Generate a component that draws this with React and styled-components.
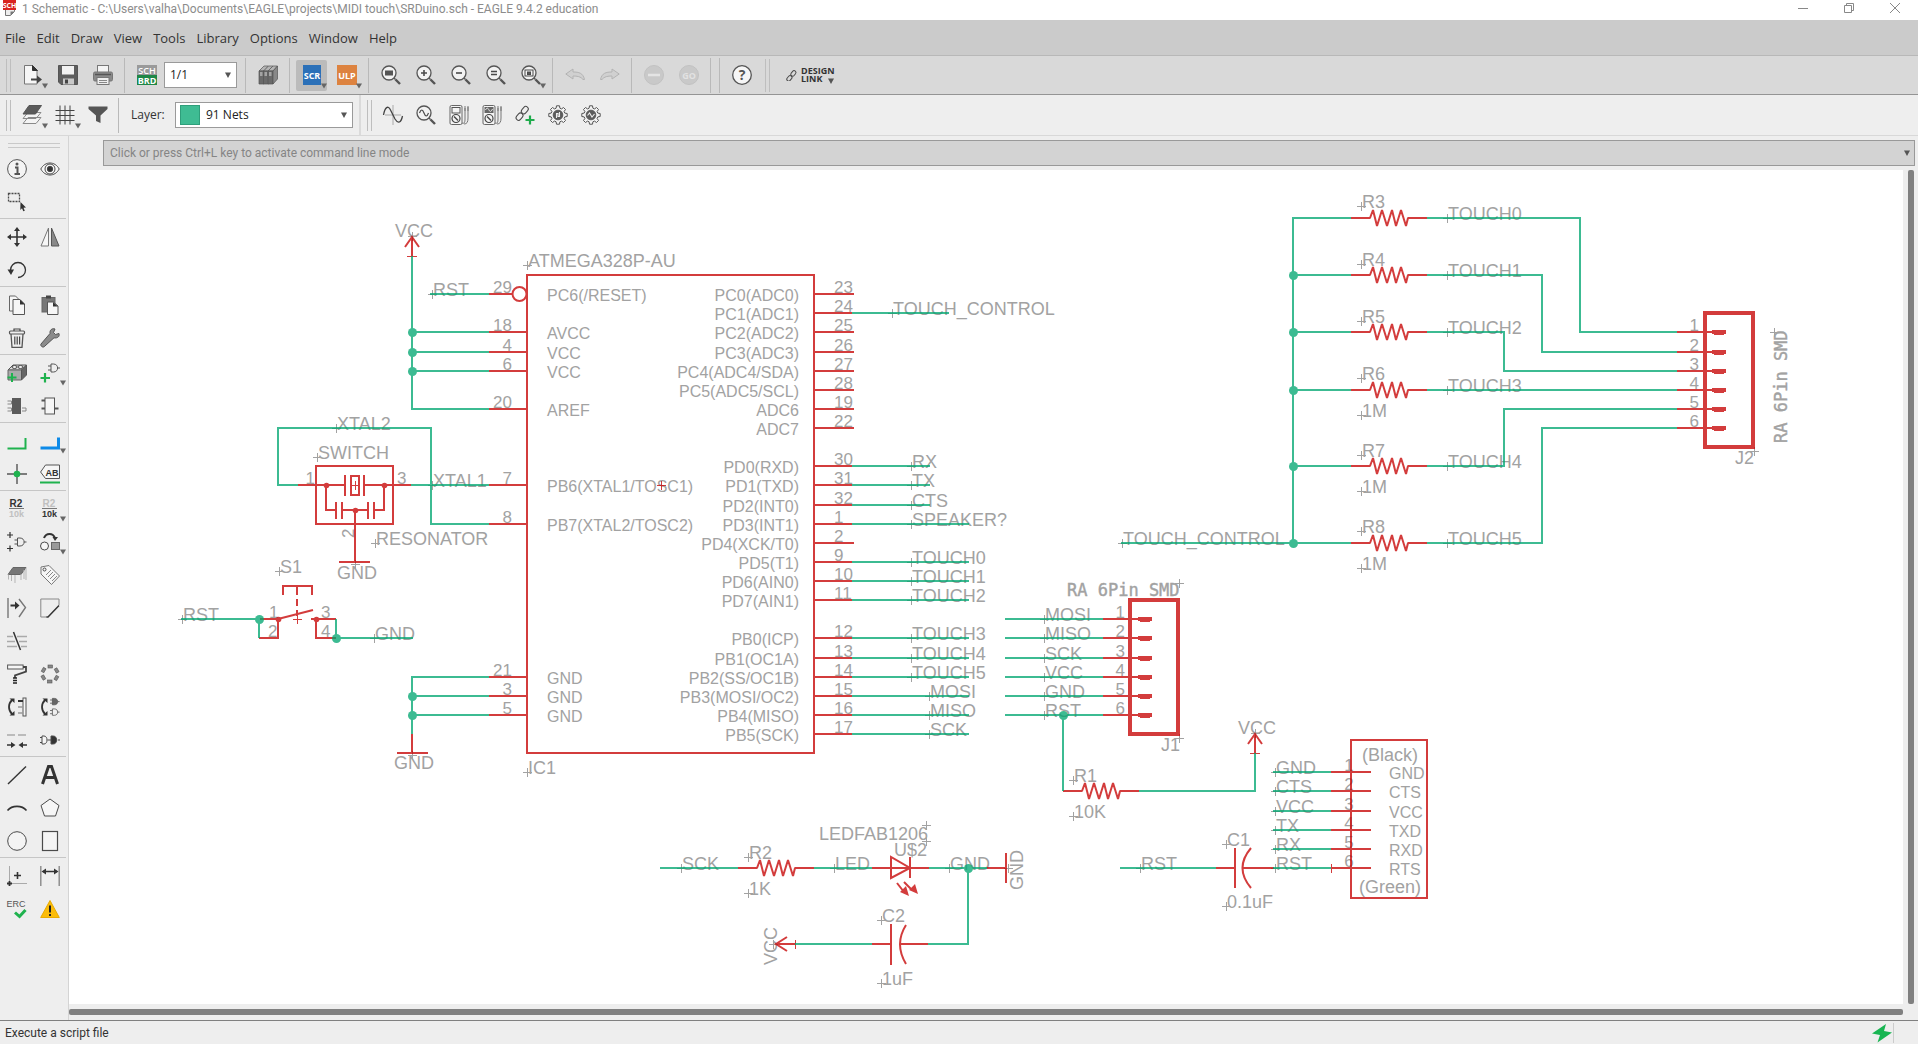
import React from "react";
import styled, { createGlobalStyle } from "styled-components";

const GlobalStyle = createGlobalStyle`
  * { box-sizing: border-box; }
  html, body, #root { height: 100%; margin: 0; }
  body {
    font-family: "Open Sans", "Noto Sans", sans-serif;
    font-size: 13px;
    line-height: 18px;
    color: #333;
    background: #eee;
    overflow: hidden;
  }
  button, select, input { font: inherit; color: inherit; }
`;

const SMALL_FONT = 'Roboto, "Open Sans", sans-serif';

/* ---------- window chrome ---------- */

const Window = styled.div`
  display: flex;
  flex-direction: column;
  height: 100vh;
`;

const TitleBar = styled.header`
  display: flex;
  align-items: flex-start;
  height: 20px;
  padding-left: 3px;
  background: #fff;
  color: #8c8c8c;
`;

const Title = styled.h1`
  flex: 1;
  margin: 0 0 0 6px;
  font-family: ${SMALL_FONT};
  font-size: 12px;
  line-height: 18px;
  font-weight: 400;
  white-space: nowrap;
`;

const WindowButton = styled.button`
  width: 46px;
  height: 16px;
  padding: 0;
  border: 0;
  background: none;
  display: grid;
  place-items: center;
`;

const MenuBar = styled.nav`
  display: flex;
  align-items: center;
  gap: 11px;
  height: 36px;
  padding: 0 5px;
  background: #cbcbcb;
  border-bottom: 1px solid #b8b8b8;
`;

const MenuItem = styled.button`
  padding: 0;
  border: 0;
  background: none;
  font-size: 13px;
  line-height: 18px;
`;

const Toolbar = styled.div`
  display: flex;
  align-items: center;
  height: ${(p) => (p.$main ? 39 : 41)}px;
  background: ${(p) => (p.$main ? "#d9d9d9" : "#eee")};
  border-bottom: 1px solid ${(p) => (p.$main ? "#949494" : "#d8d8d8")};
`;

const Handle = styled.div`
  flex: none;
  width: 5px;
  height: ${(p) => p.$h || 33}px;
  margin: 0 4px 0 6px;
  border: solid #bebebe;
  border-width: 0 1px;
`;

const Divider = styled.div`
  flex: none;
  width: 1px;
  height: 35px;
  margin: 0 4px;
  background: #b9b9b9;
`;

const BarEdge = styled.div`
  flex: none;
  width: 2px;
  height: 40px;
  margin-left: 2px;
  background: #dadada;
`;

const ToolButton = styled.button`
  position: relative;
  flex: none;
  width: ${(p) => p.$w || 35}px;
  height: 33px;
  padding: 0;
  border: 0;
  border-radius: 2px;
  display: grid;
  place-items: center;
  background: none;
  & > svg { display: block; overflow: visible; }
`;

const Pressed = styled.span`
  display: grid;
  place-items: center;
  width: 31px;
  height: 31px;
  border-radius: 2px;
  background: #bbb;
`;

const DropMark = styled.svg`
  position: absolute;
  right: ${(p) => (p.$tight ? 0 : 2)}px;
  bottom: 3px;
`;

const SelectBox = styled.div`
  position: relative;
  flex: none;
  width: ${(p) => p.$w}px;
  margin-right: 4px;
  & > svg { position: absolute; right: 6px; top: 10px; pointer-events: none; }
`;

const Select = styled.select`
  appearance: none;
  display: block;
  width: 100%;
  height: 26px;
  padding: 0 20px 0 ${(p) => p.$pad || 5}px;
  border: 1px solid #9a9a9a;
  border-radius: 0;
  background: #fff;
  color: #222;
  font-size: 12px;
`;

const Swatch = styled.span`
  position: absolute;
  left: 5px;
  top: 3px;
  width: 20px;
  height: 20px;
  border: 1px solid #2f9f7b;
  background: #3fbc93;
`;

const LayerLabel = styled.label`
  width: 44px;
  margin-left: 8px;
  font-size: 12px;
`;

const DesignLink = styled.button`
  display: flex;
  align-items: center;
  gap: 3px;
  margin-left: 12px;
  padding: 0;
  border: 0;
  background: none;
  position: relative;
  font-size: 9px;
  line-height: 8px;
  font-weight: 700;
  text-align: left;
  & > svg:last-child { position: absolute; right: 0; bottom: -1px; }
`;

/* ---------- body ---------- */

const Body = styled.div`
  flex: 1;
  min-height: 0;
  display: flex;
`;

const Palette = styled.aside`
  flex: none;
  width: 69px;
  padding-right: 2px;
  border-right: 1px solid #d4d4d4;
`;

const PaletteHandle = styled.div`
  height: 5px;
  margin: 7px 6px 4px 8px;
  border: solid #c9c9c9;
  border-width: 1px 0;
`;

const PaletteGroup = styled.div`
  display: grid;
  grid-template-columns: 33px 33px;
  & + & { border-top: 1px solid #c6c6c6; padding-top: 1px; }
`;

const Workspace = styled.main`
  flex: 1;
  min-width: 0;
  display: grid;
  grid-template-columns: 1fr 15px;
  grid-template-rows: 34px 1fr 16px;
`;

const CommandRow = styled.div`
  grid-column: 1 / 3;
  padding: 4px 3px 4px 34px;
`;

const CommandBox = styled.div`
  position: relative;
  & > svg { position: absolute; right: 5px; top: 10px; }
`;

const CommandInput = styled.input`
  display: block;
  width: 100%;
  height: 26px;
  padding: 0 6px;
  border: 1px solid #999;
  background: #d3d3d3;
  font-family: ${SMALL_FONT};
  font-size: 12px;
  &::placeholder { color: #858585; opacity: 1; }
`;

const Sheet = styled.div`
  background: #fff;
  overflow: hidden;
  & > svg { display: block; width: 100%; height: 100%; }
`;

const ScrollY = styled.div`
  padding-left: 5px;
  &::before { content: ""; display: block; width: 6px; height: 100%; border-radius: 2px; background: #808080; }
`;

const ScrollX = styled.div`
  padding-top: 5px;
  &::before { content: ""; display: block; height: 6px; border-radius: 2px; background: #808080; }
`;

const StatusBar = styled.footer`
  display: flex;
  align-items: center;
  height: 24px;
  padding: 0 24px 0 5px;
  border-top: 1px solid #808080;
  font-family: ${SMALL_FONT};
  font-size: 12px;
`;

const StatusText = styled.span`
  flex: 1;
`;

const StatusLamp = styled.span`
  padding-right: 1px;
  border-right: 1px solid #ccc;
  & > svg { display: block; }
`;

/* ---------- icons ---------- */

const K = "#4a4a4a";

const Ic = ({ children, s = 20, ...rest }) => (
  <svg width={s} height={s} viewBox="0 0 20 20" fill="none" stroke={K} strokeWidth="1" aria-hidden="true" {...rest}>
    {children}
  </svg>
);

const Tri = () => (
  <svg width="6" height="6" viewBox="0 0 6 6" aria-hidden="true"><path d="M0 0.5h6L3 6z" fill="#555" /></svg>
);

const MarkTri = ({ tight }) => (
  <DropMark $tight={tight} width="6" height="6" viewBox="0 0 6 6" aria-hidden="true"><path d="M0 0.5h6L3 5.5z" fill="#666" /></DropMark>
);

const IconText = ({ x, y, size = 8, fill = "#fff", children, anchor = "middle", weight = 700, family = "'Open Sans', 'Noto Sans', sans-serif" }) => (
  <text x={x} y={y} fontSize={size} fontWeight={weight} fill={fill} stroke="none" textAnchor={anchor} fontFamily={family}>
    {children}
  </text>
);

const BOLD_SANS = "'Liberation Sans', Arial, sans-serif";

const Lens = ({ children }) => (
  <Ic>
    <circle cx="8" cy="8" r="7" fill="#f2f2f2" stroke="#555" strokeWidth="1.3" />
    <path d="M13 13l1.5 1.5" stroke="#555" strokeWidth="1.4" />
    <path d="M14.5 14.5l4.5 4.5" stroke="#555" strokeWidth="2.4" />
    {children}
  </Ic>
);

const Cog = () => (
  <>
    <path
      d="M8.5 .8h3l.4 2.4 1.6.7 2-1.4 2 2-1.4 2 .7 1.6 2.4.4v3l-2.4.4-.7 1.6 1.4 2-2 2-2-1.4-1.6.7-.4 2.4h-3l-.4-2.4-1.6-.7-2 1.4-2-2 1.4-2-.7-1.6L.8 11.500v-3l2.400-.4.7-1.600-1.400-2 2-2 2 1.400 1.600-.7z"
      fill="#f2f2f2" stroke="#555"
    />
    <circle cx="10" cy="10" r="4.800" fill="#5c5c5c" stroke="#5c5c5c" />
  </>
);

const Chain = () => (
  <>
    <rect x="-5.500" y="-2.500" width="8" height="5" rx="2.500" transform="translate(5.500 10.500) rotate(-50)" />
    <rect x="-3.500" y="-2.500" width="8" height="5" rx="2.500" transform="translate(9.500 5.500) rotate(-50)" />
  </>
);

const Meter = ({ wave }) => (
  <Ic>
    <rect x="1" y=".5" width="12" height="19" rx="1.500" fill="#f4f4f4" stroke="#666" />
    {wave ? (
      <>
        <rect x="2.500" y="2" width="9" height="6" fill="#666" stroke="none" />
        <path d="M3.500 5c1.500-3 2.500-2 3.500 0s2 2 3.500-1" stroke="#eee" />
      </>
    ) : (
      <rect x="3" y="2.500" width="8" height="5.500" stroke="#555" />
    )}
    <circle cx="7" cy="13.500" r="4" stroke="#444" strokeWidth="1.200" />
    <path d="M5 11.500l4 4" stroke="#444" strokeWidth="1.400" />
    <path d="M13 18c2.500 1 3-1 3-4V3M19 2v11c0 4-1 6-4 6M16 1v5M19 1v5" stroke="#777" />
  </Ic>
);

const Gate = ({ x = 0, y = 0, fill = "none" }) => (
  <g transform={`translate(${x} ${y})`} stroke="#555">
    <path d="M3 .5h2.500c5.500 0 5.500 8 0 8H3z" fill={fill} />
    <path d="M0 2.500h3M0 6.500h3M9.500 4.500H12" />
  </g>
);

const Plus = ({ x, y, r = 3, w = 1.2, c = "#333" }) => (
  <path d={`M${x - r} ${y}h${2 * r}M${x} ${y - r}v${2 * r}`} stroke={c} strokeWidth={w} />
);

const Icons = {
  app: (
    <svg width="13" height="16" viewBox="0 0 13 16" aria-hidden="true">
      <path d="M2.500 4.500h9v7l-4 4h-5z" fill="#eee" stroke="#777" />
      <path d="M7.500 15.500v-4h4z" fill="#777" />
      <rect width="13" height="10" y="0" fill="#d8241f" />
      <IconText x="6.500" y="8" size="7">SCH</IconText>
    </svg>
  ),
  newDoc: (
    <Ic>
      <path d="M1.500.5h8l4.500 4.500v14h-12.500z" fill="#f6f6f6" stroke="#777" />
      <path d="M9.500.5v5h5z" fill="#333" stroke="#333" />
      <path d="M8 14.500h7" stroke="#444" strokeWidth="2" />
      <path d="M14 10.500l5 4-5 4z" fill="#444" stroke="none" />
    </Ic>
  ),
  save: (
    <Ic>
      <path d="M.5.500h19v19H3l-2.500-2.500z" fill="#5e5e5e" stroke="#555" />
      <rect x="4" y="1" width="12" height="8.500" fill="#f2f2f2" stroke="none" />
      <rect x="5" y="13.500" width="11" height="6" fill="#c9c9c9" stroke="none" />
      <rect x="7" y="14.500" width="3" height="4" fill="#444" stroke="none" />
    </Ic>
  ),
  print: (
    <Ic>
      <rect x="4.500" y=".5" width="11" height="7" fill="#f4f4f4" stroke="#777" />
      <rect x=".5" y="7" width="19" height="9" rx="1.500" fill="#8a8a8a" stroke="#777" />
      <path d="M2 9.500h16" stroke="#555" strokeWidth="1.500" />
      <rect x="4" y="12.500" width="12" height="7" fill="#eee" stroke="#777" />
      <path d="M6 15.500h8M6 17.500h8" stroke="#888" />
    </Ic>
  ),
  schBrd: (
    <Ic>
      <rect width="20" height="10" fill="#9a9a9a" stroke="none" />
      <rect y="10" width="20" height="10" fill="#1f8746" stroke="none" />
      <IconText x="10" y="8.500" size="9" weight={600}>SCH</IconText>
      <IconText x="10" y="18.500" size="9">BRD</IconText>
    </Ic>
  ),
  books: (
    <Ic>
      {[0, 4.5, 9].map((x) => (
        <g key={x} transform={`translate(${x} 0)`}>
          <path d="M1 6l5-5h4.500l-4.500 5z" fill="#b5b5b5" stroke="#555" strokeWidth=".7" />
          <path d="M1 6h5v13H1z" fill="#6a6a6a" stroke="#555" strokeWidth=".7" />
          <path d="M2 8h2.500M2 10h2.500" stroke="#ddd" />
        </g>
      ))}
      <path d="M15 6l4.500-5v13l-4.500 5z" fill="#888" stroke="#555" strokeWidth=".7" />
    </Ic>
  ),
  scr: (
    <Ic>
      <rect x="1" width="18" height="20" fill="#2b70b8" stroke="none" />
      <IconText x="10" y="13.500" size="9">SCR</IconText>
    </Ic>
  ),
  ulp: (
    <Ic>
      <rect width="20" height="20" fill="#dd8340" stroke="none" />
      <IconText x="10" y="13.500" size="9">ULP</IconText>
    </Ic>
  ),
  zoomFit: <Lens><rect x="4" y="5.500" width="8" height="5" fill="#555" stroke="none" /></Lens>,
  zoomIn: <Lens><path d="M5 8h6M8 5v6" strokeWidth="1.600" /></Lens>,
  zoomOut: <Lens><path d="M5 8h6" strokeWidth="1.600" /></Lens>,
  zoomRedraw: <Lens><path d="M5 6.500h6M5 9.500h6" strokeWidth="1.500" /></Lens>,
  zoomSel: <Lens><rect x="4" y="5" width="8" height="6" /><rect x="6.500" y="7" width="3" height="2.500" fill="#555" /></Lens>,
  undo: <Ic stroke="#b3b3b3"><path d="M.8 9L8 4v3c6 0 10 1 11.500 7.500h-1.500C16 11.500 12 11 8 11v3z" fill="#d0d0d0" /></Ic>,
  redo: <Ic stroke="#b3b3b3"><path d="M19.200 9L12 4v3C6 7 2 8 .5 14.500H2C4 11.500 8 11 12 11v3z" fill="#d0d0d0" /></Ic>,
  stop: <Ic><circle cx="10" cy="10" r="9.500" fill="#c9c9c9" stroke="#c2c2c2" /><path d="M4 10h12" stroke="#e4e4e4" strokeWidth="2.500" /></Ic>,
  go: <Ic><circle cx="10" cy="10" r="9.500" fill="#c9c9c9" stroke="#c2c2c2" /><IconText x="10" y="13.500" size="9" fill="#e2e2e2">GO</IconText></Ic>,
  help: <Ic><circle cx="10" cy="10" r="9.300" fill="#f6f6f6" stroke="#555" strokeWidth="1.300" /><IconText x="10" y="15" size="14" fill="#555">?</IconText></Ic>,
  link: <Ic s={12} strokeWidth="1.300"><g transform="translate(0 1) scale(1.250)"><Chain /></g></Ic>,
  layers: (
    <Ic>
      <path d="M1 18.500l5-6h13l-5 6zM1 13.500l5-6h13l-5 6z" fill="#f4f4f4" stroke="#8a8a8a" />
      <path d="M1 9l6-8.500h12.500L13.500 9z" fill="#5b5b5b" stroke="#555" />
    </Ic>
  ),
  grid: <Ic><path d="M5 .5v19M10 .5v19M15 .5v19M.5 5.500h19M.5 10.500h19M.5 15.500h19" stroke="#444" /></Ic>,
  filter: <Ic><path d="M.5 1.500h19v2.500l-7 6.500v7.500l-4.500-2V10.500L.5 4z" fill="#555" stroke="none" /></Ic>,
  sine: <Ic><path d="M10 0v20M2 10h16" stroke="#aaa" /><path d="M.5 10C2 2 5 0 7.500 5l4.500 9c3 5 6 4 7.500-3" stroke="#444" strokeWidth="1.300" /></Ic>,
  probe: <Lens><path d="M3.500 8c1.500-4 3-4 4.500 0s3 4 4.500 0" strokeWidth="1.200" /></Lens>,
  meter: <Meter />,
  meterWave: <Meter wave />,
  linkAdd: <Ic><Chain /><path d="M15 10.500v9M10.500 15h9" stroke="#1fab4c" strokeWidth="2.200" /></Ic>,
  cogDoc: <Ic><Cog /><path d="M8.500 13V8.500h1.500v3h1.500V7" stroke="#eee" strokeWidth="1.100" /></Ic>,
  cogWave: <Ic><Cog /><path d="M6.500 10.500l2-2.500 2.500 4 2.500-3" stroke="#eee" strokeWidth="1.100" /></Ic>,
  info: <Ic><circle cx="10" cy="10" r="9.400" fill="#f4f4f4" stroke="#555" /><path d="M8 8.500h2.500v6M7.500 15h5.500" stroke="#555" strokeWidth="2" /><circle cx="10" cy="5" r="1.500" fill="#555" stroke="none" /></Ic>,
  eye: <Ic><path d="M.8 10C5 2 15 2 19.200 10 15 18 5 18 .8 10z" fill="#f6f6f6" /><circle cx="10" cy="10" r="5" /><circle cx="10" cy="10" r="2.700" fill="#333" /></Ic>,
  group: <Ic><rect x="1.500" y="1.500" width="11" height="8" strokeDasharray="2 1" strokeWidth="1.300" /><path d="M13.500 10l5.500 5.500-2.500.2 1.300 3-1.500.600-1.300-3-1.700 1.700z" fill="#333" stroke="none" /></Ic>,
  move: <Ic><path d="M10 3v14M3 10h14" stroke="#333" strokeWidth="1.600" /><path d="M10 0l3 4H7zM10 20l-3-4h6zM0 10l4-3v6zM20 10l-4 3V7z" fill="#333" stroke="none" /></Ic>,
  mirror: <Ic><path d="M8.500 1v18H1z" fill="#f6f6f6" stroke="#777" /><path d="M11.500 1v18H19z" fill="#888" stroke="#555" /></Ic>,
  rotate: <Ic><path d="M3.500 10a7.500 7.500 0 1 1 7.500 7.500" stroke="#333" strokeWidth="1.300" /><path d="M.5 9.500h6.500L4 15z" fill="#333" stroke="none" /></Ic>,
  copy: <Ic><path d="M2.500 1h6l3 3v12h-9z" fill="#f6f6f6" stroke="#666" /><path d="M6 4.500h7l4.500 4.500v10.500H6z" fill="#f6f6f6" stroke="#555" /><path d="M13 4.500v5h5z" fill="#333" stroke="none" /></Ic>,
  paste: <Ic><rect x="2" y="2.500" width="13" height="14.500" fill="#777" stroke="#666" /><rect x="6" y=".5" width="5" height="3" fill="#444" stroke="none" /><path d="M7.500 7h6l4.500 4v8.500H7.500z" fill="#f6f6f6" stroke="#555" /><path d="M13 7v4.500h5z" fill="#333" stroke="none" /></Ic>,
  trash: <Ic><path d="M4 6l1 13.300h10L16 6" stroke="#555" strokeWidth="1.300" /><rect x="2.500" y="3" width="15" height="3" rx="1" stroke="#555" strokeWidth="1.200" /><path d="M7 3V1h6v2M7.800 8.500v8M10.200 8.500v8M12.600 8.500v8" stroke="#444" strokeWidth="1.200" /></Ic>,
  wrench: <Ic><path d="M19 5.500l-3.500 1-2-2L15 1C12 0 9.500 2 10 5.500L1 16c-1 1.500 1.500 4 3.200 2.700L14 9.800C17.500 10.500 20 8.500 19 5.500z" fill="#8b8b8b" stroke="#555" /></Ic>,
  addPart: (
    <Ic>
      <path d="M1 7l5-5h13.500l-5 5z" fill="#ddd" stroke="#555" />
      <path d="M1 7h13.500v10H1z" fill="#aaa" stroke="#666" />
      <path d="M14.500 7l5-5v10l-5 5z" fill="#666" stroke="#555" />
      <ellipse cx="7.500" cy="4" rx="2.500" ry="1.500" fill="#eee" /><ellipse cx="13.500" cy="4" rx="2.500" ry="1.500" fill="#eee" />
      <path d="M5 10v9M.5 14.500h9" stroke="#1fb24e" strokeWidth="2" />
    </Ic>
  ),
  addGate: <Ic><Gate x={8} y={0.5} /><path d="M5 10v9.500M.5 15h9.500" stroke="#1fb24e" strokeWidth="2.200" /></Ic>,
  replace: <Ic><path d="M.5 5h4v3h-4M.5 12h4v3h-4M15 12h4v3h-4" stroke="#888" /><rect x="5" y="2" width="9" height="16" fill="#5b5b5b" stroke="none" /></Ic>,
  invoke: <Ic><path d="M1.500 4.500h4M1.500 12.500h4M14.500 12.500h4" stroke="#555" strokeWidth="2" /><rect x="5" y="2" width="9.500" height="16" fill="#f6f6f6" stroke="#555" /></Ic>,
  net: <Ic><path d="M.5 17.500h18V7" stroke="#1fb24e" strokeWidth="2" /></Ic>,
  bus: <Ic><path d="M.5 17h18V6.500" stroke="#0d8ae8" strokeWidth="3" /></Ic>,
  junction: <Ic><path d="M10 0v20M0 10h20" stroke="#555" strokeWidth="1.400" /><circle cx="10" cy="10" r="3.300" fill="#1fb24e" stroke="none" /></Ic>,
  label: <Ic><path d="M5.500 1h14v13.500h-14L.6 8z" fill="#f6f6f6" stroke="#555" /><IconText x="12" y="11.500" size="9" fill="#333" family={BOLD_SANS}>AB</IconText><path d="M0 18.500h20" stroke="#1fb24e" strokeWidth="2" /></Ic>,
  name: <Ic><IconText x="9" y="8" size="10" fill="#333" family={BOLD_SANS}>R2</IconText><path d="M2 9.500h15" stroke="#777" /><IconText x="9.500" y="18" size="9" fill="#c0c0c0" family={BOLD_SANS}>10k</IconText></Ic>,
  value: <Ic><IconText x="9" y="8" size="10" fill="#c0c0c0" family={BOLD_SANS}>R2</IconText><path d="M2 9.500h15" stroke="#777" /><IconText x="9.500" y="18" size="9" fill="#333" family={BOLD_SANS}>10k</IconText></Ic>,
  gateAdd: <Ic><Gate x={7.5} y={5.5} /><Plus x={3} y={3} /><Plus x={3} y={16.5} /></Ic>,
  swap: <Ic><path d="M4 6c2-5.500 9-5.500 11 0" stroke="#333" strokeWidth="2" /><path d="M12.500 5h5.500l-3 4z" fill="#333" stroke="none" /><circle cx="4.500" cy="14" r="4" fill="#f6f6f6" /><rect x="11.500" y="10.500" width="8" height="7" fill="#999" stroke="#666" /></Ic>,
  smash: <Ic><path d="M6 2.500h13l-5 7H1z" fill="#777" stroke="#666" /><path d="M1.500 9.500v5M4.500 10v6M8 10v8M14 9v6M17 5v9M19 3v12" stroke="#b5b5b5" /></Ic>,
  tag: <Ic><path d="M1 2l8-1.500 10.500 10.500-8 8.500L1 9z" fill="#f6f6f6" stroke="#777" /><circle cx="4.500" cy="4.500" r="1.500" /><path d="M6 10l5-5M8 12l5-5M10 14l5-5M12 16l5-5" stroke="#888" /></Ic>,
  split: <Ic><path d="M1 0v20M12 1l6.500 8.500L12 19" stroke="#777" strokeWidth="1.400" /><path d="M3.500 7.500h6" stroke="#333" strokeWidth="2" /><path d="M8 3.500l4.500 4L8 11.500z" fill="#333" stroke="none" /></Ic>,
  miter: <Ic><path d="M7 19H.8V1H19v6" stroke="#888" /><path d="M6.500 19h1.500L19 7.500" stroke="#333" strokeWidth="1.500" /></Ic>,
  slice: <Ic><path d="M0 5.500h6M10 5.500h10M0 10.500h8M12 10.500h8M0 15.500h10M14 15.500h6" stroke="#aaa" strokeWidth="1.300" /><path d="M6.500 1l7 18" stroke="#333" strokeWidth="1.500" /></Ic>,
  paint: <Ic><rect x=".6" y="1" width="15.500" height="4" fill="#f6f6f6" stroke="#555" /><path d="M16 3h3v4.500L8 11.500V14" stroke="#444" strokeWidth="1.800" /><path d="M6 14h4M6 16.500h4M6 19h4" stroke="#222" strokeWidth="1.500" /></Ic>,
  optimize: (
    <Ic>
      {[0, 60, 120, 180, 240, 300].map((a) => (
        <rect key={a} x="8" y="1" width="4.500" height="3" fill="#888" stroke="#555" strokeWidth=".6" transform={`rotate(${a} 10 10)`} />
      ))}
    </Ic>
  ),
  pinSwap: <Ic><path d="M5 3C1 7 1 13 5 17" stroke="#333" strokeWidth="1.800" /><path d="M2.500 1.500h5v4.500zM2.500 18.500h5v-4.500z" fill="#333" stroke="none" /><rect x="16" y="1" width="3" height="18" fill="#f6f6f6" stroke="#555" /><path d="M11 4h5" stroke="#333" strokeWidth="2" /><path d="M11 10h5M11 16h5" stroke="#999" strokeWidth="1.400" /></Ic>,
  gateSwap: <Ic><path d="M5 3C1 7 1 13 5 17" stroke="#333" strokeWidth="1.800" /><path d="M2.500 1.500h5v4.500zM2.500 18.500h5v-4.500z" fill="#333" stroke="none" /><g transform="translate(10 1) scale(.8)"><Gate fill="#666" /></g><g transform="translate(10 11.500) scale(.8)"><Gate /></g></Ic>,
  shorten: <Ic><path d="M0 5h8M11 5h8" stroke="#aaa" strokeWidth="1.500" /><path d="M0 15h5M15 15h5" stroke="#333" strokeWidth="1.500" /><path d="M4 12l4.500 3L4 18zM16 12l-4.500 3 4.500 3z" fill="#333" stroke="none" /></Ic>,
  gates: <Ic><path d="M0 7.500h2M0 12.500h2M20 10h-2" /><path d="M2 6h2c4 0 4 8 0 8H2z" fill="#f6f6f6" /><path d="M7.500 10H11M11 6h2c5 0 5 8 0 8h-2z" fill="#333" /></Ic>,
  line: <Ic><path d="M1 19L19 1.500" stroke="#333" strokeWidth="1.400" /></Ic>,
  text: <Ic><path d="M2.500 19L8.500 1.500h3l6 17.500M5 12.500h10" stroke="#333" strokeWidth="3" /></Ic>,
  arc: <Ic><path d="M.5 12.500C5 7 15 7 19.500 12.500" stroke="#333" strokeWidth="1.600" /></Ic>,
  polygon: <Ic><path d="M10 1l9 6.500L15.500 18h-11L1 7.500z" fill="#f6f6f6" /></Ic>,
  circle: <Ic><circle cx="10" cy="10" r="9.300" fill="#f4f4f4" /></Ic>,
  rect: <Ic><rect x="2.500" y=".5" width="15" height="19" fill="#f4f4f4" strokeWidth="1.200" /></Ic>,
  addPoint: <Ic><path d="M2.500 0v18M2 17.500h18" stroke="#aaa" /><Plus x={10.500} y={9.500} r={3.500} w={1.600} /><Plus x={2.500} y={17.500} r={2.500} w={1.800} /></Ic>,
  dimension: <Ic><path d="M.8 0v20M19.200 0v20" stroke="#888" strokeWidth="1.400" /><path d="M3 5.500h14" stroke="#333" strokeWidth="1.500" /><path d="M1.500 5.500L6 2.500v6zM18.500 5.500L14 2.500v6z" fill="#333" stroke="none" /></Ic>,
  erc: <Ic><IconText x="9" y="8" size="9" weight={400} fill="#555" family={BOLD_SANS}>ERC</IconText><path d="M8 13.500l4.500 4L18.500 11" stroke="#1fb24e" strokeWidth="3" /></Ic>,
  warn: <Ic><path d="M10 1.500L19.300 18.500H.7z" fill="#fbbc09" stroke="#e8aa00" /><path d="M10 6.500v7M10 15v2" stroke="#222" strokeWidth="2" /></Ic>,
};

/* ---------- schematic ---------- */

const NET = "#00a670";
const SYM = "#c60000";
const INK = "#a2a2a2";

const TextInk = styled.g`
  fill: ${INK};
  font-family: "Liberation Sans", Arial, sans-serif;
  font-size: 18px;
`;
const Wires = styled.g`
  fill: none;
  stroke: ${(p) => p.$c};
  stroke-width: 2;
  opacity: 0.76;
  shape-rendering: crispEdges;
`;
const PinName = styled.text`
  font-size: 16px;
  text-anchor: ${(p) => (p.$end ? "end" : "start")};
`;
const PinNo = styled.text`
  font-size: 17px;
  text-anchor: ${(p) => p.$a || "start"};
`;
const Part = styled.text`
  text-anchor: ${(p) => p.$a || "start"};
`;
const MonoPart = styled.text`
  font-family: "DejaVu Sans Mono", monospace;
  font-size: 17px;
`;

const LEFT_PINS = [
  ["29", "PC6(/RESET)", 294], ["18", "AVCC", 332], ["4", "VCC", 352], ["6", "VCC", 371],
  ["20", "AREF", 409], ["7", "PB6(XTAL1/TOSC1)", 485], ["8", "PB7(XTAL2/TOSC2)", 524],
  ["21", "GND", 677], ["3", "GND", 696], ["5", "GND", 715],
];

// number, name, y, net, label x, wire end
const RIGHT_PINS = [
  ["23", "PC0(ADC0)", 294], ["24", "PC1(ADC1)", 313, "TOUCH_CONTROL", 892, 949],
  ["25", "PC2(ADC2)", 332], ["26", "PC3(ADC3)", 352], ["27", "PC4(ADC4/SDA)", 371],
  ["28", "PC5(ADC5/SCL)", 390], ["19", "ADC6", 409], ["22", "ADC7", 428],
  ["30", "PD0(RXD)", 466, "RX", 911, 930], ["31", "PD1(TXD)", 485, "TX", 911, 930],
  ["32", "PD2(INT0)", 505, "CTS", 911, 930], ["1", "PD3(INT1)", 524, "SPEAKER?", 911, 969],
  ["2", "PD4(XCK/T0)", 543], ["9", "PD5(T1)", 562, "TOUCH0", 911, 969],
  ["10", "PD6(AIN0)", 581, "TOUCH1", 911, 969], ["11", "PD7(AIN1)", 600, "TOUCH2", 911, 969],
  ["12", "PB0(ICP)", 638, "TOUCH3", 911, 969], ["13", "PB1(OC1A)", 658, "TOUCH4", 911, 969],
  ["14", "PB2(SS/OC1B)", 677, "TOUCH5", 911, 969], ["15", "PB3(MOSI/OC2)", 696, "MOSI", 929, 969],
  ["16", "PB4(MISO)", 715, "MISO", 929, 969], ["17", "PB5(SCK)", 734, "SCK", 929, 969],
];

const J1 = [["MOSI", 619], ["MISO", 638], ["SCK", 658], ["VCC", 677], ["GND", 696], ["RST", 715]];
const J2 = [332, 352, 371, 390, 409, 428];
const FTDI = [
  ["GND", "GND", 772], ["CTS", "CTS", 791], ["VCC", "VCC", 811],
  ["TX", "TXD", 830], ["RX", "RXD", 849], ["RST", "RTS", 868],
];
const TOUCH = [
  ["R3", 218, 206, "TOUCH0", null, "H1580V332H1677"],
  ["R4", 275, 264, "TOUCH1", null, "H1542V352H1677"],
  ["R5", 332, 321, "TOUCH2", null, "H1504V371H1677"],
  ["R6", 390, 378, "TOUCH3", 415, "H1677"],
  ["R7", 466, 455, "TOUCH4", 491, "H1504V409H1677"],
  ["R8", 543, 531, "TOUCH5", 568, "H1542V428H1677"],
];

const DOTS = [
  [412, 332], [412, 352], [412, 371], [412, 696], [412, 715], [259, 619], [336, 638],
  [1063, 715], [968, 868], [1293, 275], [1293, 332], [1293, 390], [1293, 466], [1293, 543],
];

const FREE_LABELS = [
  ["ATMEGA328P-AU", 527, 265], ["IC1", 527, 772], ["RST", 432, 294], ["XTAL2", 336, 428],
  ["XTAL1", 432, 485], ["SWITCH", 317, 457], ["RESONATOR", 375, 543], ["S1", 279, 571],
  ["RST", 182, 619], ["GND", 374, 638], ["TOUCH_CONTROL", 1122, 543], ["R1", 1073, 780],
  ["10K", 1073, 816], ["SCK", 681, 868], ["R2", 748, 857], ["1K", 748, 893], ["LED", 834, 868],
  ["GND", 949, 868], ["C2", 881, 920], ["1uF", 881, 983], ["RST", 1140, 868], ["C1", 1226, 844],
  ["0.1uF", 1226, 906],
];

const BARE_MARKS = [
  [412, 755], [355, 564], [1179, 583], [1179, 738], [926, 825], [926, 841], [1008, 868],
  [773, 944], [1774, 332], [1754, 451], [412, 236], [1255, 733],
];

const mark = (x, y) => `M${x - 4} ${y + 0.5}h9M${x + 0.5} ${y - 4}v9`;

const Label = ({ t, x, y }) => (
  <>
    <path d={mark(x, y)} stroke={INK} shapeRendering="crispEdges" />
    <Part x={x + 1} y={y + 2}>{t}</Part>
  </>
);

const resistor = (x, y) =>
  `M${x} ${y}h19l3 -8l4 16l5 -16l5 16l5 -16l4 16l5 -16l5 16l2 -8h19`;

const Pad = ({ x, y }) => (
  <path d={`M${x} ${y - 2}h14v4h-2v1h-10v-1h-2z`} fill={SYM} stroke="none" />
);

const Schematic = () => (
  <svg role="img" aria-label="SRDuino schematic">
    <g transform="translate(-69 -170)">
      <TextInk>
        {LEFT_PINS.map(([n, name, y]) => (
          <React.Fragment key={n}>
            <PinNo $a="end" x="512" y={y - 1}>{n}</PinNo>
            <PinName x="547" y={y + 7}>{name}</PinName>
          </React.Fragment>
        ))}
        {RIGHT_PINS.map(([n, name, y, net, lx]) => (
          <React.Fragment key={n}>
            <PinNo x="834" y={y - 1}>{n}</PinNo>
            <PinName $end x="799" y={y + 7}>{name}</PinName>
            {net && <Label t={net} x={lx} y={y} />}
          </React.Fragment>
        ))}
        {FREE_LABELS.map(([t, x, y]) => <Label key={t + x + y} t={t} x={x} y={y} />)}
        {BARE_MARKS.map(([x, y]) => <path key={`${x}-${y}`} d={mark(x, y)} stroke={INK} shapeRendering="crispEdges" />)}
        {J1.map(([t, y], i) => (
          <React.Fragment key={t}>
            <Label t={t} x={1044} y={y} />
            <PinNo $a="end" x="1125" y={y - 1}>{i + 1}</PinNo>
          </React.Fragment>
        ))}
        {J2.map((y, i) => <PinNo key={y} $a="end" x="1699" y={y - 1}>{i + 1}</PinNo>)}
        {FTDI.map(([net, name, y], i) => (
          <React.Fragment key={net}>
            <Label t={net} x={1275} y={y} />
            <PinNo $a="middle" x="1349" y={y - 1}>{i + 1}</PinNo>
            <PinName x="1389" y={y + 7}>{name}</PinName>
          </React.Fragment>
        ))}
        {TOUCH.map(([r, y, ry, net, vy]) => (
          <React.Fragment key={r}>
            <Label t={r} x={1361} y={ry} />
            <Label t={net} x={1447} y={y} />
            {vy && <Label t="1M" x={1361} y={vy} />}
          </React.Fragment>
        ))}
        <Part $a="middle" x="414" y="237">VCC</Part>
        <Part $a="middle" x="414" y="769">GND</Part>
        <Part $a="middle" x="357" y="579">GND</Part>
        <Part $a="middle" x="1257" y="734">VCC</Part>
        <Part $a="end" x="928" y="840">LEDFAB1206</Part>
        <Part $a="end" x="927" y="856">U$2</Part>
        <Part $a="end" x="1180" y="751">J1</Part>
        <Part $a="end" x="1754" y="464">J2</Part>
        <Part $a="middle" x="1390" y="761">(Black)</Part>
        <Part $a="middle" x="1390" y="893">(Green)</Part>
        <Part $a="middle" transform="translate(1023 870) rotate(-90)">GND</Part>
        <Part $a="middle" transform="translate(777 946) rotate(-90)">VCC</Part>
        <g stroke={INK} strokeWidth=".4">
          <MonoPart x="1067" y="596">RA 6Pin SMD</MonoPart>
          <MonoPart transform="translate(1787 443) rotate(-90)">RA 6Pin SMD</MonoPart>
        </g>
        <PinNo $a="end" x="315" y="484">1</PinNo>
        <PinNo x="397" y="484">3</PinNo>
        <PinNo transform="translate(354 538) rotate(-90)">2</PinNo>
        <PinNo x="269" y="618">1</PinNo>
        <PinNo x="268" y="637">2</PinNo>
        <PinNo x="321" y="618">3</PinNo>
        <PinNo x="321" y="637">4</PinNo>
      </TextInk>

      <Wires $c={SYM}>
        <rect x="527" y="275" width="287" height="478" />
        {LEFT_PINS.map(([n, , y]) => <path key={n} d={`M489 ${y}H${n === "29" ? 512 : 527}`} />)}
        <circle cx="519.5" cy="294" r="7" shapeRendering="auto" />
        {RIGHT_PINS.map(([n, , y, net]) => <path key={n} d={`M814 ${y}H${net ? 852 : 854}`} />)}
        <path d="M412 256V237M405 247L412 237L419 247M1255 753V734M1248 744L1255 734L1262 744" shapeRendering="auto" />
        <path d="M412 734V753M397 753H428M339 562H370M355 510V562" />
        <path strokeWidth="1" d={`M407 256.500h10M1250 753.500h10M795.500 940v9M1331.500 864v9${mark(661, 485)}${mark(297, 619)}${mark(355, 485)}`} />
        <rect x="316" y="466" width="77" height="58" />
        <path d="M298 485H345M345 475V496M364 475V496M364 485H411M326 485V510H336M336 502V519M342 502V519M342 510H368M368 502V519M374 502V519M374 510H384V485" />
        <rect x="351" y="476" width="8" height="19" />
        <g fill={SYM} stroke="none" shapeRendering="auto">
          <circle cx="326.5" cy="485.5" r="2.8" /><circle cx="384.5" cy="485.5" r="2.800" />
          <circle cx="355.5" cy="510.500" r="2.800" /><circle cx="278.500" cy="619.500" r="2.800" />
          <circle cx="316.500" cy="619.500" r="2.800" />
        </g>
        <path d="M260 619H278V638H259M311 619H336M316 619V638H336M283 595V586H312V595M297 586V595M297 599V606M297 610V616" />
        <path d="M278 619L313 610" shapeRendering="auto" />
        <rect x="1130" y="600" width="48" height="134" strokeWidth="4" />
        <rect x="1705" y="313" width="48" height="134" strokeWidth="4" />
        {J1.map(([, y]) => <React.Fragment key={y}><path d={`M1103 ${y}H1140`} /><Pad x={1138} y={y} /></React.Fragment>)}
        {J2.map((y) => <React.Fragment key={y}><path d={`M1677 ${y}H1714`} /><Pad x={1712} y={y} /></React.Fragment>)}
        <g shapeRendering="auto" strokeLinejoin="bevel">
          {TOUCH.map(([r, y]) => <path key={r} d={resistor(1351, y)} />)}
          <path d={resistor(1063, 791)} />
          <path d={resistor(738, 868)} />
        </g>
        <path d="M872 868H929M910 857V878M987 868H1006M1006 853V883" />
        <path d="M891 857V878L910 868Z" shapeRendering="auto" />
        <g shapeRendering="auto">
          <path d="M897 883L904 892M904 882L912 890" />
          <path d="M909 896L900 892L906 886ZM918 894L909 890L915 884Z" fill={SYM} stroke="none" />
        </g>
        <path d="M928 944H900M891 924V965M891 944H872M795 944H776M1216 868H1235M1235 848V888M1243 868H1274" />
        <path d="M906 925Q894 944 906 964M1251 848Q1234 868 1251 888M787 937L776 944L787 951" shapeRendering="auto" />
        <rect x="1351" y="740" width="76" height="158" />
        {FTDI.map(([net, , y]) => <path key={net} d={`M1331 ${y}H1371`} />)}
      </Wires>

      <Wires $c={NET}>
        <path d="M412 256V409H489M412 332H489M412 352H489M412 371H489M430 294H489" />
        <path d="M298 485H278V428H431V524H489M411 485H489" />
        <path d="M489 677H412V734M412 696H489M412 715H489" />
        <path d="M181 619H259V638M336 619V638H413" />
        {RIGHT_PINS.filter((p) => p[3]).map(([n, , y, , , end]) => <path key={n} d={`M852 ${y}H${end}`} />)}
        {J1.map(([t, y]) => <path key={t} d={`M1005 ${y}H1103`} />)}
        <path d="M1063 715V791M1139 791H1255V753" />
        <path d="M660 868H738M814 868H872M929 868H987M968 868V944H928M872 944H795" />
        <path d="M1120 868H1216" />
        {FTDI.map(([net, , y]) => <path key={net} d={`M1273 ${y}H1331`} />)}
        <path d="M1293 217V543M1121 543H1293" />
        {TOUCH.map(([r, y, , , , run]) => <path key={r} d={`M1293 ${y}H1351M1427 ${y}${run}`} />)}
        <g fill={NET} stroke="none" shapeRendering="auto">
          {DOTS.map(([x, y]) => <circle key={`${x}-${y}`} cx={x + 0.5} cy={y + 0.5} r="4.500" />)}
        </g>
      </Wires>
    </g>
  </svg>
);

/* ---------- assembly ---------- */

const Tool = ({ icon, label, drop, w, pressed }) => (
  <ToolButton type="button" aria-label={label} $w={w}>
    {pressed ? <Pressed>{Icons[icon]}</Pressed> : Icons[icon]}
    {drop && <MarkTri tight={w === 33} />}
  </ToolButton>
);

const PALETTE = [
  [["info", "Info"], ["eye", "Show"], ["group", "Group"]],
  [["move", "Move"], ["mirror", "Mirror"], ["rotate", "Rotate"]],
  [["copy", "Copy"], ["paste", "Paste"], ["trash", "Delete"], ["wrench", "Change"]],
  [["addPart", "Add part"], ["addGate", "Add gate", true], ["replace", "Replace"], ["invoke", "Invoke"]],
  [["net", "Net"], ["bus", "Bus", true], ["junction", "Junction"], ["label", "Label"]],
  [
    ["name", "Name"], ["value", "Value", true], ["gateAdd", "Copy gate"], ["swap", "Swap", true],
    ["smash", "Smash"], ["tag", "Attribute"], ["split", "Split"], ["miter", "Miter"], ["slice", "Slice"], null,
    ["paint", "Paint"], ["optimize", "Optimize"], ["pinSwap", "Pin swap"], ["gateSwap", "Gate swap"],
    ["shorten", "Shorten"], ["gates", "Gates"],
  ],
  [["line", "Line"], ["text", "Text"], ["arc", "Arc"], ["polygon", "Polygon"], ["circle", "Circle"], ["rect", "Rectangle"]],
  [["addPoint", "Mark"], ["dimension", "Dimension"], ["erc", "ERC"], ["warn", "Errors"]],
];

const MENUS = ["File", "Edit", "Draw", "View", "Tools", "Library", "Options", "Window", "Help"];

export default function App() {
  return (
    <Window>
      <GlobalStyle />
      <TitleBar>
        {Icons.app}
        <Title>1 Schematic - C:\Users\valha\Documents\EAGLE\projects\MIDI touch\SRDuino.sch - EAGLE 9.4.2 education</Title>
        <WindowButton type="button" aria-label="Minimize">
          <svg width="10" height="10"><path d="M0 5.500h10" stroke="#888" /></svg>
        </WindowButton>
        <WindowButton type="button" aria-label="Restore">
          <svg width="10" height="10" fill="none" stroke="#888"><path d="M.5 2.500h7v7h-7zM2.500 2.500v-2h7v7h-2" /></svg>
        </WindowButton>
        <WindowButton type="button" aria-label="Close">
          <svg width="10" height="10" stroke="#888"><path d="M0 0l10 10M10 0L0 10" /></svg>
        </WindowButton>
      </TitleBar>

      <MenuBar>
        {MENUS.map((m) => <MenuItem key={m} type="button">{m}</MenuItem>)}
      </MenuBar>

      <Toolbar $main>
        <Handle />
        <Tool icon="newDoc" label="New" drop />
        <Tool icon="save" label="Save" />
        <Tool icon="print" label="Print" />
        <Divider />
        <Tool icon="schBrd" label="Switch to board" />
        <SelectBox $w={73}>
          <Select aria-label="Sheet" defaultValue="1/1"><option>1/1</option></Select>
          <Tri />
        </SelectBox>
        <Divider />
        <Tool icon="books" label="Libraries" />
        <Divider />
        <Tool icon="scr" label="Script" drop pressed />
        <Tool icon="ulp" label="ULP" drop />
        <Divider />
        <Tool icon="zoomFit" label="Zoom to fit" />
        <Tool icon="zoomIn" label="Zoom in" />
        <Tool icon="zoomOut" label="Zoom out" />
        <Tool icon="zoomRedraw" label="Redraw" />
        <Tool icon="zoomSel" label="Zoom select" drop />
        <Divider />
        <Tool icon="undo" label="Undo" />
        <Tool icon="redo" label="Redo" />
        <Divider />
        <Tool icon="stop" label="Stop" />
        <Tool icon="go" label="Go" />
        <Divider />
        <Divider />
        <Tool icon="help" label="Help" />
        <Handle />
        <DesignLink type="button">
          {Icons.link}
          <span>DESIGN<br />LINK</span>
          <Tri />
        </DesignLink>
      </Toolbar>

      <Toolbar>
        <Handle $h={31} />
        <Tool icon="layers" label="Layer settings" drop w={33} />
        <Tool icon="grid" label="Grid" drop w={33} />
        <Tool icon="filter" label="Filter" w={33} />
        <Divider />
        <LayerLabel htmlFor="layer">Layer:</LayerLabel>
        <SelectBox $w={178}>
          <Select id="layer" $pad={30} defaultValue="91 Nets"><option>91 Nets</option></Select>
          <Swatch />
          <Tri />
        </SelectBox>
        <BarEdge />
        <Handle $h={31} />
        <Tool icon="sine" label="Simulate" w={33} />
        <Tool icon="probe" label="Probe" w={33} />
        <Tool icon="meter" label="Meter" w={33} />
        <Tool icon="meterWave" label="Wave meter" w={33} />
        <Tool icon="linkAdd" label="Add link" w={33} />
        <Tool icon="cogDoc" label="Model settings" w={33} />
        <Tool icon="cogWave" label="Simulation settings" w={33} />
      </Toolbar>

      <Body>
        <Palette>
          <PaletteHandle />
          {PALETTE.map((group, i) => (
            <PaletteGroup key={i}>
              {group.map((t, j) => (t ? <Tool key={t[0]} icon={t[0]} label={t[1]} drop={t[2]} w={33} /> : <span key={j} />))}
            </PaletteGroup>
          ))}
        </Palette>
        <Workspace>
          <CommandRow>
            <CommandBox>
              <CommandInput aria-label="Command line" placeholder="Click or press Ctrl+L key to activate command line mode" />
              <Tri />
            </CommandBox>
          </CommandRow>
          <Sheet><Schematic /></Sheet>
          <ScrollY />
          <ScrollX />
        </Workspace>
      </Body>

      <StatusBar>
        <StatusText>Execute a script file</StatusText>
        <StatusLamp>
          <svg width="20" height="20" viewBox="0 0 20 20" aria-hidden="true">
            <path d="M14 1L0 10.500l8 1.500-2.500 7.500L20 9.500 12 8z" fill="#18b552" />
          </svg>
        </StatusLamp>
      </StatusBar>
    </Window>
  );
}
